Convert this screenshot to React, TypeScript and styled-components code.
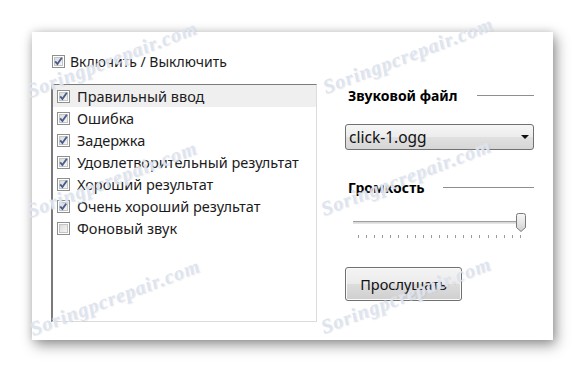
import React from 'react';
import styled, { createGlobalStyle } from 'styled-components';

const GlobalStyle = createGlobalStyle`
  html, body {
    margin: 0;
    padding: 0;
    background: #ffffff;
  }
  body {
    font-family: 'Noto Sans', 'Open Sans', sans-serif;
    color: #1c1c1c;
  }
`;

const Page = styled.div`
  position: relative;
  width: 585px;
  height: 374px;
  padding: 32px 0 0 32px;
  box-sizing: border-box;
  overflow: hidden;
`;

const Panel = styled.div`
  width: 521px;
  height: 308px;
  box-sizing: border-box;
  background: #ffffff;
  box-shadow: 3px 5px 13px rgba(0, 0, 0, 0.42), 0 0 8px rgba(0, 0, 0, 0.12);
  padding: 22px 19px 0 19px;
  display: flex;
`;

const LeftColumn = styled.div`
  display: flex;
  flex-direction: column;
`;

const Toggle = styled.label`
  display: flex;
  align-items: center;
  gap: 5px;
  height: 14px;
  margin: 0 0 16px 1px;
  font-size: 14px;
  white-space: nowrap;
`;

const List = styled.div`
  width: 266px;
  height: 238px;
  box-sizing: border-box;
  border-left: 2px solid #7a7a7a;
  border-top: 1px solid #7a7a7a;
  border-right: 1px solid #dcdcdc;
  border-bottom: 1px solid #dcdcdc;
  display: flex;
  flex-direction: column;
`;

const Row = styled.div<{ $selected?: boolean }>`
  display: flex;
  align-items: center;
  gap: 7px;
  height: 22px;
  flex-shrink: 0;
  padding-left: 4px;
  font-size: 14.5px;
  white-space: nowrap;
  background: ${({ $selected }) => ($selected ? '#efefef' : 'transparent')};
`;

const RightColumn = styled.div`
  width: 189px;
  margin-left: 28px;
  padding-top: 33px;
  display: flex;
  flex-direction: column;
`;

const SectionHead = styled.div<{ $top?: number }>`
  display: flex;
  align-items: center;
  height: 16px;
  margin-top: ${({ $top }) => $top ?? 0}px;
  padding-left: 3px;
  font-size: 14px;
  font-weight: 700;
  color: #000;
  white-space: nowrap;

  &::after {
    content: '';
    flex: 1;
    height: 1px;
    margin-left: 19px;
    background: #8e8e8e;
  }
`;

const Select = styled.div`
  margin-top: 21px;
  height: 26px;
  box-sizing: border-box;
  border: 1px solid #707070;
  border-radius: 3px;
  background: linear-gradient(#f6f6f6, #ececec 50%, #e0e0e0 51%, #d6d6d6);
  display: flex;
  align-items: center;
  justify-content: space-between;
  padding: 0 4px 0 3px;
  font-size: 15.5px;
  color: #111;
`;

const Arrow = styled.span`
  width: 0;
  height: 0;
  border-left: 4px solid transparent;
  border-right: 4px solid transparent;
  border-top: 4px solid #111;
`;

const Slider = styled.div`
  position: relative;
  margin: 18px 0 0 8px;
  padding-top: 8px;
  width: 173px;
  height: 28px;
  box-sizing: border-box;
`;

const Track = styled.div`
  width: 166px;
  height: 3px;
  box-sizing: border-box;
  border-top: 1px solid #a0a0a0;
  border-bottom: 1px solid #e4e4e4;
  background: #d9d9d9;
`;

const Thumb = styled.svg`
  position: absolute;
  right: 0;
  top: 0;
`;

const Ticks = styled.div`
  margin: 11px 0 0 5px;
  width: 163px;
  display: flex;
  justify-content: space-between;
`;

const Tick = styled.span`
  width: 1px;
  height: 3px;
  background: #9a9a9a;
`;

const Button = styled.button`
  margin-top: 26px;
  width: 117px;
  height: 34px;
  border: 1px solid #707070;
  border-radius: 3px;
  background: linear-gradient(#f4f4f4, #ebebeb 50%, #dddddd 51%, #cfcfcf);
  box-shadow: inset 0 0 0 1px #fbfbfb;
  font-family: 'Noto Sans', 'Open Sans', sans-serif;
  font-size: 14.5px;
  color: #111;
  padding: 0;
`;

const Watermarks = styled.div`
  position: absolute;
  inset: 0;
  pointer-events: none;
`;

const Mark = styled.span`
  position: absolute;
  width: 220px;
  margin-left: -110px;
  margin-top: -14px;
  text-align: center;
  transform: rotate(-21deg);
  font-family: 'Liberation Serif', serif;
  font-style: italic;
  font-weight: 700;
  font-size: 20px;
  letter-spacing: 1px;
  color: rgba(180, 196, 222, 0.45);
  text-shadow: 0 0 1px #fff, 1px 1px 1px rgba(140, 140, 140, 0.18);
`;

const Check = ({ checked }: { checked: boolean }) => (
  <svg width="13" height="13" viewBox="0 0 13 13" style={{ flexShrink: 0 }}>
    <defs>
      <linearGradient id="cbg" x1="0" y1="0" x2="1" y2="1">
        <stop offset="0" stopColor="#d9d9d9" />
        <stop offset="1" stopColor="#f7f7f7" />
      </linearGradient>
    </defs>
    <rect x="0.5" y="0.5" width="12" height="12" fill="#fff" stroke="#8e8f8f" />
    <rect x="2.5" y="2.5" width="8" height="8" fill="url(#cbg)" stroke="#c4c4c4" />
    {checked && (
      <path d="M3.2 6.4 L5.4 9 L9.8 2.8" fill="none" stroke="#4a5c8c" strokeWidth="1.9" />
    )}
  </svg>
);

const items = [
  { label: 'Правильный ввод', checked: true },
  { label: 'Ошибка', checked: true },
  { label: 'Задержка', checked: true },
  { label: 'Удовлетворительный результат', checked: true },
  { label: 'Хороший результат', checked: true },
  { label: 'Очень хороший результат', checked: true },
  { label: 'Фоновый звук', checked: false },
];

const marks = [
  [112, 62],
  [408, 58],
  [112, 182],
  [406, 180],
  [115, 300],
  [406, 298],
];

export default function App() {
  return (
    <Page>
      <GlobalStyle />
      <Panel>
        <LeftColumn>
          <Toggle>
            <Check checked />
            Включить / Выключить
          </Toggle>
          <List>
            {items.map((item, i) => (
              <Row key={item.label} $selected={i === 0}>
                <Check checked={item.checked} />
                {item.label}
              </Row>
            ))}
          </List>
        </LeftColumn>
        <RightColumn>
          <SectionHead>Звуковой файл</SectionHead>
          <Select>
            click-1.ogg
            <Arrow />
          </Select>
          <SectionHead $top={29}>Громкость</SectionHead>
          <Slider>
            <Track />
            <Ticks>
              {Array.from({ length: 21 }).map((_, i) => (
                <Tick key={i} />
              ))}
            </Ticks>
            <Thumb width="10" height="19" viewBox="0 0 10 19">
              <defs>
                <linearGradient id="thumb" x1="0" y1="0" x2="0" y2="1">
                  <stop offset="0" stopColor="#f6f6f6" />
                  <stop offset="0.5" stopColor="#e6e6e6" />
                  <stop offset="1" stopColor="#cfcfcf" />
                </linearGradient>
              </defs>
              <path
                d="M0.5 2.5 Q0.5 0.5 2.5 0.5 L7.5 0.5 Q9.5 0.5 9.5 2.5 L9.5 14.5 L5 18.5 L0.5 14.5 Z"
                fill="url(#thumb)"
                stroke="#7a7a7a"
              />
            </Thumb>
          </Slider>
          <Button>Прослушать</Button>
        </RightColumn>
      </Panel>
      <Watermarks>
        {marks.map(([x, y], i) => (
          <Mark key={i} style={{ left: x, top: y }}>
            Soringpcrepair.com
          </Mark>
        ))}
      </Watermarks>
    </Page>
  );
}
